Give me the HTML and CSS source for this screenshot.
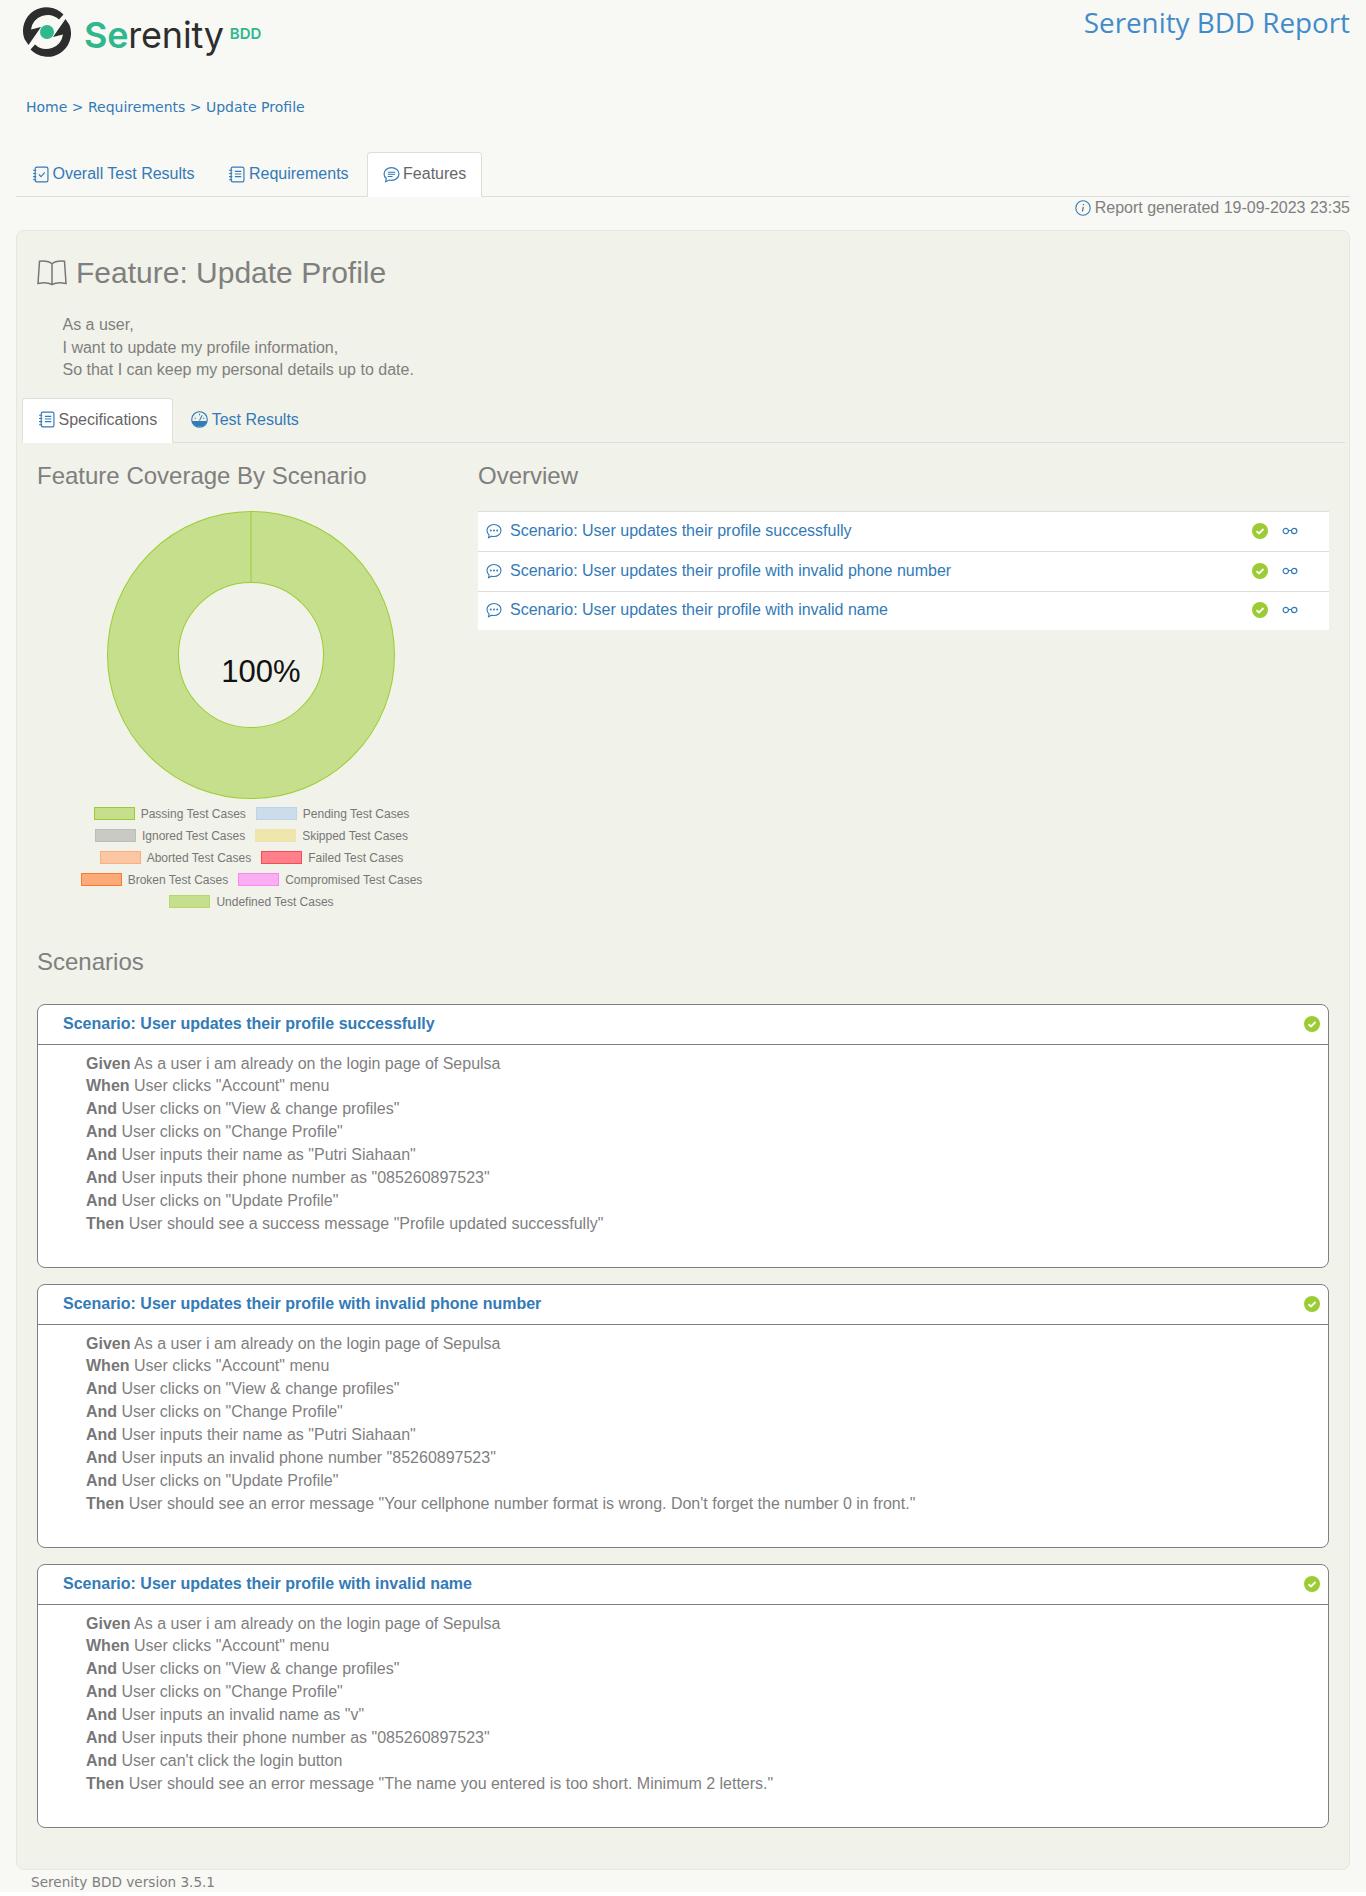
FILE: index.html
```html
<!DOCTYPE html>
<html lang="en">
<head>
    <meta charset="UTF-8">
    <meta name="viewport" content="width=device-width, initial-scale=1.0">
    <title>Serenity BDD Report</title>
    <link rel="stylesheet" href="styles.css">
</head>
<body>
    <svg class="icon-sprites" width="0" height="0">
        <symbol id="i-notebook" viewBox="0 0 16 16">
            <rect x="3" y="1" width="12" height="14" rx="1.5" fill="none" stroke="currentColor" stroke-width="1.1"/>
            <path d="M1 4h3M1 7h3M1 10h3M1 13h3" stroke="currentColor" stroke-width="1" fill="none"/>
            <path d="M6.5 5h6M6.5 7.5h6M6.5 10h6" stroke="currentColor" stroke-width="1.1" fill="none"/>
        </symbol>
        <symbol id="i-checklist" viewBox="0 0 16 16">
            <rect x="3" y="1" width="12" height="14" rx="1.5" fill="none" stroke="currentColor" stroke-width="1.1"/>
            <path d="M1 4h3M1 7h3M1 10h3M1 13h3" stroke="currentColor" stroke-width="1" fill="none"/>
            <path d="M6.5 8l2 2 3.5-4" stroke="currentColor" stroke-width="1" fill="none"/>
        </symbol>
        <symbol id="i-chat" viewBox="0 0 16 16">
            <path d="M8 1.500c3.900 0 7 2.700 7 6s-3.100 6-7 6c-.8 0-1.600-.1-2.300-.3L2.500 14.800l.6-3C1.800 10.700 1 9.200 1 7.500c0-3.300 3.100-6 7-6z" fill="none" stroke="currentColor" stroke-width="1.100"/>
            <path d="M4.500 5.800h7M4.500 7.800h7M4.500 9.800h4.500" stroke="currentColor" stroke-width="1" fill="none"/>
        </symbol>
        <symbol id="i-dots" viewBox="0 0 16 16">
            <path d="M8 1.500c3.900 0 7 2.700 7 6s-3.100 6-7 6c-.8 0-1.600-.1-2.300-.3L2.500 14.800l.6-3C1.800 10.700 1 9.200 1 7.500c0-3.300 3.100-6 7-6z" fill="none" stroke="currentColor" stroke-width="1.100"/>
            <circle cx="4.800" cy="7.500" r="1"/><circle cx="8" cy="7.500" r="1"/><circle cx="11.200" cy="7.500" r="1"/>
        </symbol>
        <symbol id="i-check" viewBox="0 0 16 16">
            <circle cx="8" cy="8" r="8" fill="#9ccc33"/>
            <path d="M4.500 8.300l2.500 2.200 4.500-4.500" fill="none" stroke="#fff" stroke-width="1.800"/>
        </symbol>
        <symbol id="i-glasses" viewBox="0 0 16 8">
            <circle cx="3.800" cy="4" r="2.700" fill="none" stroke="currentColor" stroke-width="1.200"/>
            <circle cx="12.200" cy="4" r="2.700" fill="none" stroke="currentColor" stroke-width="1.200"/>
            <path d="M6.500 3.500h3" stroke="currentColor" stroke-width="1"/>
        </symbol>
    </svg>

    <header class="top-bar">
        <div class="logo">
            <svg class="logo-mark" viewBox="0 0 52 52" width="52" height="52">
                <path d="M3.500 33A23.500 23.500 0 0 1 42.500 8.500L38 13.500A16.800 16.800 0 0 0 10 23.500L20 21 7.500 39z" fill="#2d2d2d"/>
                <path d="M48.500 19A23.500 23.500 0 0 1 9.500 43.500L14 38.500A16.800 16.800 0 0 0 42 28.500L32 31 44.500 13z" fill="#2d2d2d"/>
                <circle cx="26" cy="26" r="7" fill="#2fb78d"/>
            </svg>
            <span class="logo-name"><span class="logo-accent">Se</span>renity</span>
            <span class="logo-bdd">BDD</span>
        </div>
        <div class="report-title">Serenity BDD Report</div>
    </header>

    <nav class="crumbs"><a href="#">Home</a> &gt; <a href="#">Requirements</a> &gt; <a href="#">Update Profile</a></nav>

    <ul class="tabs main-tabs">
        <li class="tab"><a href="#"><svg class="tab-icon"><use href="#i-checklist"/></svg>Overall Test Results</a></li>
        <li class="tab"><a href="#"><svg class="tab-icon"><use href="#i-notebook"/></svg>Requirements</a></li>
        <li class="tab active"><a href="#"><svg class="tab-icon"><use href="#i-chat"/></svg>Features</a></li>
    </ul>

    <div class="generated">
        <svg class="info-icon" viewBox="0 0 16 16" width="16" height="16">
            <circle cx="8" cy="8" r="7.200" fill="none" stroke="#337ab7" stroke-width="1.100"/>
            <path d="M8.300 6.800l-.8 4.700M8.500 4v1.300" stroke="#666" stroke-width="1.200" fill="none"/>
        </svg>
        Report generated 19-09-2023 23:35
    </div>

    <main class="panel">
        <h1 class="feature-title">
            <svg class="book-icon" viewBox="0 0 30 26" width="30" height="26">
                <path d="M15 4C13 1.800 8 .8 2.500 1.200L1 23.500c5-1 10.500-.8 14 1 3.500-1.800 9-2 14-1L27.500 1.200C22 .8 17 1.800 15 4zM15 4v20.500" fill="none" stroke="#777" stroke-width="1.500"/>
            </svg>
            Feature: Update Profile
        </h1>
        <div class="narrative">
            As a user,<br>
            I want to update my profile information,<br>
            So that I can keep my personal details up to date.
        </div>

        <ul class="tabs inner-tabs">
            <li class="tab active"><a href="#"><svg class="tab-icon"><use href="#i-notebook"/></svg>Specifications</a></li>
            <li class="tab"><a href="#">
                <svg class="tab-icon" viewBox="0 0 16 16">
                    <circle cx="8" cy="8" r="7.300" fill="none" stroke="currentColor" stroke-width="1.100"/>
                    <path d="M1 9.500h14A7.300 7.300 0 0 1 1 9.500z" fill="currentColor"/>
                    <path d="M8 9L10.500 4M3.500 6.500l1 .6M12.500 6.500l-1 .6M8 2.500V4" stroke="currentColor" stroke-width="1" fill="none"/>
                </svg>Test Results</a></li>
        </ul>

        <section class="summary">
            <div class="coverage">
                <h2 class="section-title">Feature Coverage By Scenario</h2>
                <svg class="donut" viewBox="0 0 290 290" width="290" height="290">
                    <circle cx="145" cy="145" r="108" fill="none" stroke="#9ccc33" stroke-width="72"/>
                    <circle cx="145" cy="145" r="108" fill="none" stroke="#c6df8c" stroke-width="70"/>
                    <path d="M145 1v71" stroke="#9ccc33" stroke-width="1"/>
                    <text x="155" y="172" class="donut-label">100%</text>
                </svg>
                <div class="legend">
                    <div class="legend-row">
                        <span class="legend-item"><i class="swatch sw-passing"></i>Passing Test Cases</span>
                        <span class="legend-item"><i class="swatch sw-pending"></i>Pending Test Cases</span>
                    </div>
                    <div class="legend-row">
                        <span class="legend-item"><i class="swatch sw-ignored"></i>Ignored Test Cases</span>
                        <span class="legend-item"><i class="swatch sw-skipped"></i>Skipped Test Cases</span>
                    </div>
                    <div class="legend-row">
                        <span class="legend-item"><i class="swatch sw-aborted"></i>Aborted Test Cases</span>
                        <span class="legend-item"><i class="swatch sw-failed"></i>Failed Test Cases</span>
                    </div>
                    <div class="legend-row">
                        <span class="legend-item"><i class="swatch sw-broken"></i>Broken Test Cases</span>
                        <span class="legend-item"><i class="swatch sw-compromised"></i>Compromised Test Cases</span>
                    </div>
                    <div class="legend-row">
                        <span class="legend-item"><i class="swatch sw-undefined"></i>Undefined Test Cases</span>
                    </div>
                </div>
            </div>
            <div class="overview">
                <h2 class="section-title">Overview</h2>
                <ul class="overview-list">
                    <li class="overview-row">
                        <svg class="row-icon"><use href="#i-dots"/></svg>
                        <a class="row-link" href="#">Scenario: User updates their profile successfully</a>
                        <svg class="check-icon"><use href="#i-check"/></svg>
                        <svg class="glasses-icon"><use href="#i-glasses"/></svg>
                    </li>
                    <li class="overview-row">
                        <svg class="row-icon"><use href="#i-dots"/></svg>
                        <a class="row-link" href="#">Scenario: User updates their profile with invalid phone number</a>
                        <svg class="check-icon"><use href="#i-check"/></svg>
                        <svg class="glasses-icon"><use href="#i-glasses"/></svg>
                    </li>
                    <li class="overview-row">
                        <svg class="row-icon"><use href="#i-dots"/></svg>
                        <a class="row-link" href="#">Scenario: User updates their profile with invalid name</a>
                        <svg class="check-icon"><use href="#i-check"/></svg>
                        <svg class="glasses-icon"><use href="#i-glasses"/></svg>
                    </li>
                </ul>
            </div>
        </section>

        <h2 class="section-title scenarios-title">Scenarios</h2>

        <article class="scenario">
            <header class="scenario-head">
                <a href="#">Scenario: User updates their profile successfully</a>
                <svg class="check-icon"><use href="#i-check"/></svg>
            </header>
            <div class="steps">
                <div><b>Given</b> As a user i am already on the login page of Sepulsa</div>
                <div><b>When</b> User clicks "Account" menu</div>
                <div><b>And</b> User clicks on "View &amp; change profiles"</div>
                <div><b>And</b> User clicks on "Change Profile"</div>
                <div><b>And</b> User inputs their name as "Putri Siahaan"</div>
                <div><b>And</b> User inputs their phone number as "085260897523"</div>
                <div><b>And</b> User clicks on "Update Profile"</div>
                <div><b>Then</b> User should see a success message "Profile updated successfully"</div>
            </div>
        </article>

        <article class="scenario">
            <header class="scenario-head">
                <a href="#">Scenario: User updates their profile with invalid phone number</a>
                <svg class="check-icon"><use href="#i-check"/></svg>
            </header>
            <div class="steps">
                <div><b>Given</b> As a user i am already on the login page of Sepulsa</div>
                <div><b>When</b> User clicks "Account" menu</div>
                <div><b>And</b> User clicks on "View &amp; change profiles"</div>
                <div><b>And</b> User clicks on "Change Profile"</div>
                <div><b>And</b> User inputs their name as "Putri Siahaan"</div>
                <div><b>And</b> User inputs an invalid phone number "85260897523"</div>
                <div><b>And</b> User clicks on "Update Profile"</div>
                <div><b>Then</b> User should see an error message "Your cellphone number format is wrong. Don't forget the number 0 in front."</div>
            </div>
        </article>

        <article class="scenario">
            <header class="scenario-head">
                <a href="#">Scenario: User updates their profile with invalid name</a>
                <svg class="check-icon"><use href="#i-check"/></svg>
            </header>
            <div class="steps">
                <div><b>Given</b> As a user i am already on the login page of Sepulsa</div>
                <div><b>When</b> User clicks "Account" menu</div>
                <div><b>And</b> User clicks on "View &amp; change profiles"</div>
                <div><b>And</b> User clicks on "Change Profile"</div>
                <div><b>And</b> User inputs an invalid name as "v"</div>
                <div><b>And</b> User inputs their phone number as "085260897523"</div>
                <div><b>And</b> User can't click the login button</div>
                <div><b>Then</b> User should see an error message "The name you entered is too short. Minimum 2 letters."</div>
            </div>
        </article>
    </main>

    <footer class="version">Serenity BDD version 3.5.1</footer>
</body>
</html>
```

FILE: styles.css
```css
html {
    background: #fff;
}
body {
    margin: 0;
    height: 1892px;
    overflow: hidden;
    background: #f8f8f4;
    font-family: "Liberation Sans", Arial, sans-serif;
    font-size: 16px;
    color: #7f7f7f;
}
a {
    color: #337ab7;
    text-decoration: none;
}
.icon-sprites {
    position: absolute;
}
.top-bar {
    display: flex;
    justify-content: space-between;
    height: 66px;
    padding: 6px 16px 0 21px;
    box-sizing: border-box;
}
.logo {
    display: flex;
    align-items: flex-start;
    height: 52px;
}
.logo-name {
    margin: 6px 0 0 11px;
    font-family: Inter, sans-serif;
    font-size: 36px;
    line-height: 46px;
    letter-spacing: -0.200px;
    color: #2d2d2d;
}
.logo-accent {
    color: #2fb78d;
    font-weight: 600;
}
.logo-bdd {
    margin: 18px 0 0 6px;
    font-family: Inter, sans-serif;
    font-weight: 600;
    font-size: 15px;
    line-height: 20px;
    color: #2fb78d;
}
.report-title {
    margin-top: -2px;
    font-family: "Open Sans", sans-serif;
    font-size: 27.800px;
    line-height: 36px;
    color: #428bca;
}
.crumbs {
    margin: 31px 0 0 26px;
    font-family: "DejaVu Sans", Verdana, sans-serif;
    font-size: 14px;
    line-height: 20px;
    color: #337ab7;
}
.tabs {
    display: flex;
    list-style: none;
    margin: 0;
    padding: 0;
    border-bottom: 1px solid #ddd;
}
.main-tabs {
    margin: 35px 16px 0 16px;
    height: 44px;
}
.tab {
    height: 44px;
    box-sizing: border-box;
    margin-right: 2px;
    border: 1px solid transparent;
    border-radius: 4px 4px 0 0;
}
.tab a {
    display: flex;
    align-items: center;
    height: 42px;
    padding: 0 15px;
}
.tab.active {
    height: 45px;
    background: #fff;
    border-color: #ddd;
    border-bottom-color: #fff;
}
.tab.active a {
    color: #666;
}
.tab-icon {
    width: 17px;
    height: 17px;
    margin-right: 3.500px;
    fill: currentColor;
    color: #337ab7;
}
.generated {
    display: flex;
    justify-content: flex-end;
    align-items: center;
    gap: 4px;
    height: 22px;
    margin-right: 16px;
}
.panel {
    margin: 11px 16px 0 16px;
    height: 1640px;
    box-sizing: border-box;
    padding: 22px 20px 0 20px;
    background: #f1f2e9;
    border: 1px solid #e6e7e0;
    border-radius: 8px;
}
.feature-title {
    display: flex;
    align-items: center;
    gap: 9px;
    margin: 0;
    height: 40px;
    font-size: 30px;
    font-weight: 400;
    color: #7f7f7f;
}
.narrative {
    margin: 21px 0 0 25.500px;
    line-height: 22.500px;
}
.inner-tabs {
    margin: 16px -16px 0 -15px;
    height: 44px;
}
.summary {
    display: flex;
    height: 476px;
}
.coverage {
    width: 441px;
}
.section-title {
    margin: 0;
    font-size: 24px;
    font-weight: 400;
    line-height: 32px;
    color: #7f7f7f;
}
.summary .section-title {
    margin-top: 17px;
}
.donut {
    display: block;
    margin: 18px 0 0 69px;
}
.donut-label {
    font-family: "Liberation Sans", Arial, sans-serif;
    font-size: 31px;
    fill: #111;
    text-anchor: middle;
}
.legend {
    margin: 3px 0 0 0;
    width: 429px;
    font-size: 12px;
    color: #777;
}
.legend-row {
    display: flex;
    justify-content: center;
    gap: 10px;
    height: 22px;
    align-items: center;
}
.legend-item {
    display: flex;
    align-items: center;
    gap: 6px;
    white-space: nowrap;
}
.swatch {
    display: block;
    width: 41px;
    height: 13px;
    box-sizing: border-box;
    border: 1px solid;
}
.sw-passing, .sw-undefined { background: #c6df8c; border-color: #9ccc33; }
.sw-undefined { border-color: #b5d870; }
.sw-pending { background: #ccdcea; border-color: #bcd4ea; }
.sw-ignored { background: #cacac4; border-color: #bcbcb8; }
.sw-skipped { background: #efe6ac; border-color: #ece5b0; }
.sw-aborted { background: #fbc6a4; border-color: #fdae80; }
.sw-failed { background: #ff8088; border-color: #f84a5a; }
.sw-broken { background: #fbab78; border-color: #f97a30; }
.sw-compromised { background: #f8aef0; border-color: #fc88f4; }
.overview {
    flex: 1;
}
.overview-list {
    list-style: none;
    margin: 19px 0 0 0;
    padding: 0;
    background: #fff;
    border-top: 1px solid #ddd;
}
.overview-row {
    display: flex;
    align-items: center;
    height: 39px;
    padding: 0 8px;
    border-bottom: 1px solid #ddd;
}
.overview-row:last-child {
    height: 37px;
    padding-bottom: 1px;
    border-bottom: 0;
}
.row-icon {
    width: 16px;
    height: 16px;
    color: #337ab7;
    fill: currentColor;
}
.row-link {
    flex: 1;
    margin-left: 8px;
}
.check-icon {
    width: 16px;
    height: 16px;
}
.glasses-icon {
    width: 16px;
    height: 8px;
    margin: 0 23px 0 14px;
    color: #337ab7;
}
.scenarios-title {
    margin-top: 27px;
}
.scenario {
    height: 264px;
    box-sizing: border-box;
    margin-bottom: 16px;
    background: #fff;
    border: 1px solid #7f7f7f;
    border-radius: 8px;
}
.scenarios-title + .scenario {
    margin-top: 26px;
}
.scenario-head {
    display: flex;
    justify-content: space-between;
    align-items: center;
    height: 40px;
    box-sizing: border-box;
    padding: 0 8px 0 25px;
    border-bottom: 1px solid #7f7f7f;
    font-weight: 700;
}
.steps {
    padding: 8px 0 0 48px;
    line-height: 22.857px;
}
.steps b {
    color: #777;
}
.version {
    margin: 4px 0 0 31px;
    font-family: "DejaVu Sans", Verdana, sans-serif;
    font-size: 13.600px;
    line-height: 16px;
    color: #7f7f7f;
}
```
